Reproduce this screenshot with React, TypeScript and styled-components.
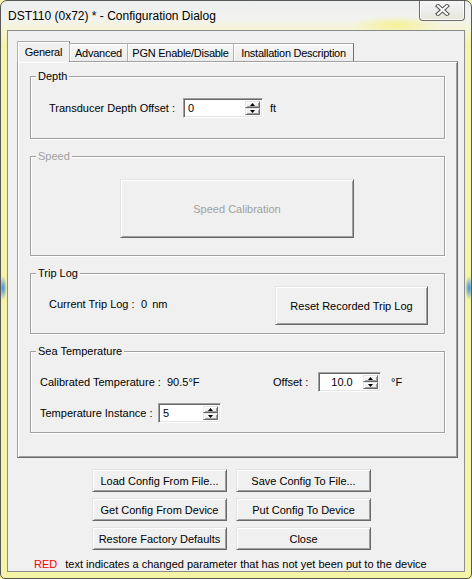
import React from "react";
import styled, { createGlobalStyle, css } from "styled-components";

const Global = createGlobalStyle`
  html, body { margin: 0; padding: 0; background: #f5f3a6; }
  body { font-family: "Liberation Sans", Arial, sans-serif; font-size: 11px; color: #000; }
  * { box-sizing: border-box; }
`;

const Window = styled.div`
  width: 472px;
  height: 579px;
  border: 1px solid #585858;
  border-radius: 7px 7px 5px 5px;
  padding: 0 6px 6px;
  display: flex;
  flex-direction: column;
  overflow: hidden;
  background:
    radial-gradient(ellipse 4px 12px at 2px 287px, #3d8ee0, rgba(61, 142, 224, 0)),
    radial-gradient(ellipse 4px 12px at 468px 287px, #3d8ee0, rgba(61, 142, 224, 0)),
    radial-gradient(ellipse 45px 9px at 395px 24px, rgba(246, 240, 140, 0.9), rgba(246, 240, 140, 0)),
    linear-gradient(to bottom, #eceeef 0, #f2f3ef 18px, #f6f5d0 30px, #f5f3aa 44px, #f5f3a6 100%);
`;

const TitleBar = styled.div`
  height: 29px;
  display: flex;
  align-items: flex-start;
  justify-content: space-between;
  flex-shrink: 0;
`;

const TitleText = styled.div`
  font-size: 12px;
  line-height: 14px;
  margin-top: 8px;
  padding-left: 1px;
  color: #000;
`;

const CloseButton = styled.div`
  width: 46px;
  height: 21px;
  margin-top: -1px;
  border: 1px solid #6e6e6e;
  border-top: none;
  border-radius: 0 0 4px 4px;
  background: linear-gradient(to bottom, #f6f6f6, #ececec 55%, #e7e6d6);
  box-shadow: inset 0 0 0 1px rgba(255, 255, 255, 0.8);
  display: flex;
  align-items: center;
  justify-content: center;
`;

const Client = styled.div`
  flex: 1;
  border: 1px solid #8b8b8b;
  background: #f0f0f0;
  display: flex;
  flex-direction: column;
  padding: 10px 6px 0 9px;
`;

const TabStrip = styled.div`
  display: flex;
  align-items: flex-end;
  height: 20px;
  position: relative;
  z-index: 1;
`;

const Tab = styled.div<{ $active?: boolean; $w: number }>`
  width: ${(p) => p.$w}px;
  border: 1px solid;
  border-color: #a9a9a9 #707070 transparent #b4b4b4;
  border-bottom: none;
  box-shadow: inset 1px 1px 0 #fff;
  display: flex;
  align-items: center;
  justify-content: center;
  white-space: nowrap;
  letter-spacing: -0.25px;
  ${(p) =>
    p.$active
      ? css`
          height: 21px;
          margin-bottom: -1px;
          background: #f0f0f0;
        `
      : css`
          height: 18px;
          margin-left: -1px;
          background: linear-gradient(to bottom, #f6f6f6, #ececec);
        `}
`;

const Panel = styled.div`
  height: 397px;
  flex-shrink: 0;
  border: 1px solid;
  border-color: #a0a0a0 #696969 #696969 #a0a0a0;
  box-shadow: inset 1px 1px 0 #fff, inset -1px -1px 0 #a0a0a0;
  background: #f0f0f0;
  padding: 14px 12px 0 12px;
  display: flex;
  flex-direction: column;
  gap: 17px;
`;

const GroupBox = styled.div<{ $h: number }>`
  position: relative;
  height: ${(p) => p.$h}px;
  flex-shrink: 0;
  border: 1px solid #a0a0a0;
  box-shadow: 1px 1px 0 #fff, inset 1px 1px 0 #fff;
`;

const GroupTitle = styled.span<{ $disabled?: boolean }>`
  position: absolute;
  top: -7px;
  left: 5px;
  padding: 0 2px;
  line-height: 13px;
  background: #f0f0f0;
  color: ${(p) => (p.$disabled ? "#a0a0a0" : "#000")};
`;

const Row = styled.div<{ $pad: string }>`
  display: flex;
  align-items: center;
  padding: ${(p) => p.$pad};
`;

const Label = styled.span<{ $w?: number }>`
  display: inline-block;
  white-space: nowrap;
  line-height: 13px;
  ${(p) => (p.$w ? `width: ${p.$w}px; flex-shrink: 0;` : "")}
`;

const Unit = styled.span<{ $ml: number }>`
  margin-left: ${(p) => p.$ml}px;
  line-height: 13px;
`;

const SeaBody = styled.div`
  display: flex;
  flex-direction: column;
  gap: 11px;
  padding: 20px 0 0 9px;
`;

const SpinBox = styled.div<{ $w: number }>`
  width: ${(p) => p.$w}px;
  height: 20px;
  flex-shrink: 0;
  display: flex;
  background: #fff;
  border: 1px solid;
  border-color: #a0a0a0 #fff #fff #a0a0a0;
  box-shadow: inset 1px 1px 0 #696969, inset -1px -1px 0 #e3e3e3;
  padding: 2px 2px 2px 2px;
`;

const SpinText = styled.div<{ $center?: boolean }>`
  flex: 1;
  line-height: 14px;
  padding-left: ${(p) => (p.$center ? "0" : "2px")};
  text-align: ${(p) => (p.$center ? "center" : "left")};
`;

const SpinButtons = styled.div`
  width: 15px;
  display: flex;
  flex-direction: column;
`;

const SpinBtn = styled.div`
  flex: 1;
  background: #f0f0f0;
  border: 1px solid;
  border-color: #e3e3e3 #696969 #696969 #e3e3e3;
  box-shadow: inset 1px 1px 0 #fff, inset -1px -1px 0 #a0a0a0;
  display: flex;
  align-items: center;
  justify-content: center;
`;

const Button = styled.div<{ $w?: number; $h: number; $disabled?: boolean }>`
  ${(p) => (p.$w ? `width: ${p.$w}px;` : "")}
  height: ${(p) => p.$h}px;
  flex-shrink: 0;
  background: #f0f0f0;
  border: 1px solid;
  border-color: #e3e3e3 #696969 #696969 #e3e3e3;
  box-shadow: inset 1px 1px 0 #fff, inset -1px -1px 0 #a0a0a0;
  display: flex;
  align-items: center;
  justify-content: center;
  white-space: nowrap;
  color: ${(p) => (p.$disabled ? "#a0a0a0" : "#000")};
`;

const SpeedBody = styled.div`
  padding: 22px 0 0 89px;
`;

const TripRow = styled.div`
  display: flex;
  align-items: center;
  justify-content: space-between;
  padding: 12px 16px 0 18px;
`;

const TripText = styled.div`
  display: flex;
  align-items: center;
  margin-bottom: 3px;
`;

const ButtonGrid = styled.div`
  display: grid;
  grid-template-columns: 135px 135px;
  column-gap: 9px;
  row-gap: 6px;
  margin: 11px 0 0 75px;
`;

const Footer = styled.div`
  margin-top: 7px;
  padding-left: 17px;
  line-height: 14px;
  white-space: nowrap;
`;

const Red = styled.span`
  color: #ff0000;
  margin-right: 5px;
`;

const Arrow = ({ up }: { up?: boolean }) => (
  <svg width="5" height="3" viewBox="0 0 5 3">
    <path d={up ? "M2.5 0 L5 3 L0 3 Z" : "M0 0 L5 0 L2.5 3 Z"} fill="#000" />
  </svg>
);

const Spinner = ({ w, value, center }: { w: number; value: string; center?: boolean }) => (
  <SpinBox $w={w}>
    <SpinText $center={center}>{value}</SpinText>
    <SpinButtons>
      <SpinBtn>
        <Arrow up />
      </SpinBtn>
      <SpinBtn>
        <Arrow />
      </SpinBtn>
    </SpinButtons>
  </SpinBox>
);

const CloseIcon = () => (
  <svg width="15" height="12" viewBox="0 0 15 12">
    <path d="M3 2 L12 10 M12 2 L3 10" stroke="#5a5a5a" strokeWidth="4.2" strokeLinecap="square" />
    <path d="M3 2 L12 10 M12 2 L3 10" stroke="#fff" strokeWidth="2" strokeLinecap="square" />
  </svg>
);

export default function App() {
  return (
    <>
      <Global />
      <Window>
        <TitleBar>
          <TitleText>DST110 (0x72) * - Configuration Dialog</TitleText>
          <CloseButton>
            <CloseIcon />
          </CloseButton>
        </TitleBar>
        <Client>
          <TabStrip>
            <Tab $active $w={53}>General</Tab>
            <Tab $w={59}>Advanced</Tab>
            <Tab $w={107}>PGN Enable/Disable</Tab>
            <Tab $w={121}>Installation Description</Tab>
          </TabStrip>
          <Panel>
            <GroupBox $h={63}>
              <GroupTitle>Depth</GroupTitle>
              <Row $pad="21px 0 0 18px">
                <Label $w={134}>Transducer Depth Offset :</Label>
                <Spinner w={80} value="0" />
                <Unit $ml={7}>ft</Unit>
              </Row>
            </GroupBox>
            <GroupBox $h={100}>
              <GroupTitle $disabled>Speed</GroupTitle>
              <SpeedBody>
                <Button $w={234} $h={59} $disabled>
                  Speed Calibration
                </Button>
              </SpeedBody>
            </GroupBox>
            <GroupBox $h={61}>
              <GroupTitle>Trip Log</GroupTitle>
              <TripRow>
                <TripText>
                  <Label $w={92}>Current Trip Log :</Label>
                  <Label>0</Label>
                  <Unit $ml={5}>nm</Unit>
                </TripText>
                <Button $w={153} $h={39}>
                  Reset Recorded Trip Log
                </Button>
              </TripRow>
            </GroupBox>
            <GroupBox $h={82}>
              <GroupTitle>Sea Temperature</GroupTitle>
              <SeaBody>
                <Row $pad="0">
                  <Label $w={127}>Calibrated Temperature :</Label>
                  <Label $w={106}>90.5°F</Label>
                  <Label $w={45}>Offset :</Label>
                  <Spinner w={63} value="10.0" center />
                  <Unit $ml={10}>°F</Unit>
                </Row>
                <Row $pad="0">
                  <Label $w={118}>Temperature Instance :</Label>
                  <Spinner w={63} value="5" />
                </Row>
              </SeaBody>
            </GroupBox>
          </Panel>
          <ButtonGrid>
            <Button $h={23}>Load Config From File...</Button>
            <Button $h={23}>Save Config To File...</Button>
            <Button $h={23}>Get Config From Device</Button>
            <Button $h={23}>Put Config To Device</Button>
            <Button $h={23}>Restore Factory Defaults</Button>
            <Button $h={23}>Close</Button>
          </ButtonGrid>
          <Footer>
            <Red>RED</Red> text indicates a changed parameter that has not yet been put to the device
          </Footer>
        </Client>
      </Window>
    </>
  );
}
